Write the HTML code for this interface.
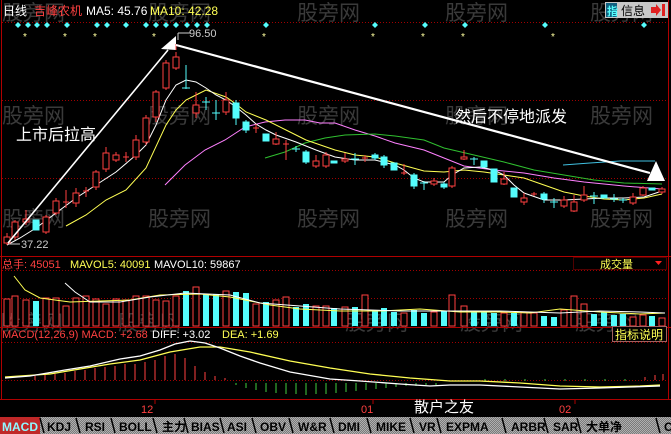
<!DOCTYPE html>
<html><head><meta charset="utf-8"><style>
html,body{margin:0;padding:0;background:#000;}
svg{display:block;font-family:"Liberation Sans","WenQuanYi Zen Hei","Noto Sans CJK SC",sans-serif;}
.r line,.r rect{stroke:#ff4040;stroke-width:1;fill:#000}
.c line{stroke:#54fcfc;stroke-width:1}
.c rect{fill:#54fcfc;stroke:#54fcfc}
.vr rect{stroke:#ff4040;fill:#000}
.vc rect{fill:#54fcfc}
.wm{fill:#3a3a3a;font-size:21px}
</style></head><body>
<svg width="671" height="434" viewBox="0 0 671 434" xmlns="http://www.w3.org/2000/svg">
<rect width="671" height="434" fill="#000"/>
<g class="wm">
<text x="2" y="20">股旁网</text><text x="148" y="20">股旁网</text><text x="297" y="20">股旁网</text><text x="445" y="20">股旁网</text><text x="590" y="20">股旁网</text>
<text x="2" y="123">股旁网</text><text x="148" y="123">股旁网</text><text x="297" y="123">股旁网</text><text x="445" y="123">股旁网</text><text x="590" y="123">股旁网</text>
<text x="2" y="226">股旁网</text><text x="148" y="226">股旁网</text><text x="297" y="226">股旁网</text><text x="445" y="226">股旁网</text><text x="590" y="226">股旁网</text>
<text x="0" y="330">股旁网</text><text x="118" y="330">股旁网</text><text x="345" y="330">股旁网</text><text x="460" y="330">股旁网</text><text x="575" y="330">股旁网</text>
</g>
<line x1="1.5" y1="0" x2="1.5" y2="400" stroke="#b00000"/>
<line x1="668.5" y1="0" x2="668.5" y2="400" stroke="#b00000"/>
<g stroke="#a00000" stroke-dasharray="1,2">
<line x1="2" y1="22.5" x2="668" y2="22.5"/><line x1="2" y1="100.5" x2="668" y2="100.5"/><line x1="2" y1="178.5" x2="668" y2="178.5"/>
<line x1="2" y1="270.5" x2="668" y2="270.5"/><line x1="2" y1="298.5" x2="668" y2="298.5"/>
<line x1="2" y1="342.5" x2="668" y2="342.5"/><line x1="2" y1="380.5" x2="668" y2="380.5"/>
</g>
<line x1="0" y1="256.5" x2="671" y2="256.5" stroke="#b00000"/>
<line x1="0" y1="327.5" x2="671" y2="327.5" stroke="#b00000"/>
<line x1="0" y1="399.5" x2="671" y2="399.5" stroke="#b00000"/>
<text x="3" y="15" font-size="12" fill="#fff">日线</text>
<text x="34" y="15" font-size="12" fill="#ff4040">吉峰农机</text>
<text x="86" y="15" font-size="12" fill="#fff">MA5: 45.76</text>
<text x="150" y="15" font-size="12" fill="#ffff54">MA10: 42.28</text>
<rect x="605" y="2" width="63" height="16" fill="#c8c8c8"/>
<rect x="606" y="3" width="11" height="14" fill="#106080"/>
<text x="607" y="15" font-size="11" fill="#54fcfc" font-weight="bold">指</text>
<text x="621" y="15" font-size="12" fill="#000">信息</text>
<path d="M651 7h5v-3l5 6-5 6v-3h-5z" fill="#e02020"/><rect x="662" y="4" width="3" height="12" fill="#e02020"/>
<g fill="#54fcfc">
<path d="M18 22l3 3-3 3-3-3z"/><path d="M28 22l3 3-3 3-3-3z"/><path d="M37 22l3 3-3 3-3-3z"/><path d="M47 22l3 3-3 3-3-3z"/><path d="M67 22l3 3-3 3-3-3z"/><path d="M97 22l3 3-3 3-3-3z"/><path d="M107 22l3 3-3 3-3-3z"/><path d="M126 22l3 3-3 3-3-3z"/><path d="M146 22l3 3-3 3-3-3z"/><path d="M156 22l3 3-3 3-3-3z"/><path d="M166 22l3 3-3 3-3-3z"/><path d="M176 22l3 3-3 3-3-3z"/><path d="M187 22l3 3-3 3-3-3z"/><path d="M197 22l3 3-3 3-3-3z"/><path d="M207 22l3 3-3 3-3-3z"/><path d="M266 22l3 3-3 3-3-3z"/><path d="M375 22l3 3-3 3-3-3z"/><path d="M425 22l3 3-3 3-3-3z"/><path d="M465 22l3 3-3 3-3-3z"/><path d="M545 22l3 3-3 3-3-3z"/><path d="M644 22l3 3-3 3-3-3z"/>
</g>
<g fill="#ffffa0" font-size="10"><text x="23" y="40">*</text><text x="63" y="40">*</text><text x="93" y="40">*</text><text x="152" y="40">*</text><text x="262" y="40">*</text><text x="371" y="40">*</text><text x="421" y="40">*</text><text x="461" y="40">*</text><text x="551" y="40">*</text></g>
<polyline fill="none" stroke="#ff80ff" points="165,185 185,165 205,150 225,140 245,127 265,122 285,120 305,120 320,123 335,123 355,130 375,136 395,143 424,150 444,158 464,166 494,170 524,173 554,178 584,182 624,186 662,189"/>
<polyline fill="none" stroke="#30c030" points="265,158 285,152 305,143 325,138 345,135 375,134 395,136 424,140 444,148 474,155 504,162 534,170 564,175 594,180 624,183 662,184"/>
<polyline fill="none" stroke="#40c0e0" points="563,165 590,163 620,161 655,161"/>
<polyline fill="none" stroke="#ffff54" points="66,226 86,215 106,200 126,190 146,168 166,125 176,110 186,100 196,95 206,90 226,97 236,104 246,112 266,120 286,130 306,140 335,150 355,155 375,157 395,163 424,171 444,172 464,170 484,172 504,175 524,178 544,185 564,192 584,196 604,199 624,200 644,198 662,194"/>
<polyline fill="none" stroke="#fff" points="7,245 20,238 36,228 56,213 76,198 96,185 116,172 136,155 146,145 156,125 166,100 176,85 186,80 196,82 206,88 216,95 226,100 236,107 246,115 256,124 266,130 276,135 296,142 316,150 335,157 355,160 375,160 395,165 404,170 414,178 424,182 444,182 452,175 464,168 480,167 494,170 504,175 514,185 524,193 544,200 564,200 584,199 604,198 624,198 644,197 662,191"/>
<g class="r">
<line x1="7" y1="233" x2="7" y2="245"/><rect x="4" y="237" width="6" height="6"/>
<line x1="15" y1="220" x2="15" y2="240"/><rect x="12" y="222" width="6" height="15"/>
<line x1="26" y1="210" x2="26" y2="225"/><rect x="23" y="219" width="6" height="3"/>
<line x1="46" y1="215" x2="46" y2="234"/><rect x="43" y="217" width="6" height="15"/>
<line x1="56" y1="198" x2="56" y2="215"/><rect x="53" y="201" width="6" height="12"/>
<line x1="66" y1="190" x2="66" y2="208"/><line x1="63" y1="202" x2="69" y2="202"/>
<line x1="76" y1="188" x2="76" y2="207"/><rect x="73" y="193" width="6" height="10"/>
<line x1="86" y1="187" x2="86" y2="197"/><line x1="83" y1="191" x2="89" y2="191"/>
<line x1="96" y1="170" x2="96" y2="190"/><rect x="93" y="172" width="6" height="15"/>
<line x1="106" y1="147" x2="106" y2="172"/><rect x="103" y="153" width="6" height="16"/>
<line x1="116" y1="152" x2="116" y2="162"/><rect x="113" y="155" width="6" height="5"/>
<line x1="126" y1="152" x2="126" y2="162"/><line x1="123" y1="157" x2="129" y2="157"/>
<line x1="136" y1="135" x2="136" y2="160"/><rect x="133" y="140" width="6" height="17"/>
<line x1="146" y1="115" x2="146" y2="145"/><rect x="143" y="118" width="6" height="24"/>
<line x1="156" y1="90" x2="156" y2="122"/><rect x="153" y="92" width="6" height="25"/>
<line x1="166" y1="60" x2="166" y2="90"/><rect x="163" y="63" width="6" height="25"/>
<line x1="176" y1="52" x2="176" y2="70"/><rect x="173" y="57" width="6" height="11"/>
<line x1="196" y1="92" x2="196" y2="118"/><rect x="193" y="105" width="6" height="8"/>
<line x1="226" y1="92" x2="226" y2="115"/><rect x="223" y="100" width="6" height="12"/>
<line x1="256" y1="124" x2="256" y2="133"/><line x1="253" y1="128" x2="259" y2="128"/>
<line x1="276" y1="132" x2="276" y2="145"/><rect x="273" y="139" width="6" height="5"/>
<line x1="286" y1="140" x2="286" y2="160"/><line x1="283" y1="144" x2="289" y2="144"/>
<line x1="316" y1="155" x2="316" y2="168"/><rect x="313" y="161" width="6" height="5"/>
<line x1="326" y1="152" x2="326" y2="168"/><rect x="323" y="155" width="6" height="11"/>
<line x1="345" y1="153" x2="345" y2="163"/><rect x="342" y="159" width="6" height="2"/>
<line x1="365" y1="155" x2="365" y2="162"/><line x1="362" y1="158" x2="368" y2="158"/>
<line x1="404" y1="164" x2="404" y2="175"/><line x1="401" y1="173" x2="407" y2="173"/>
<line x1="434" y1="178" x2="434" y2="186"/><rect x="431" y="181" width="6" height="3"/>
<line x1="452" y1="166" x2="452" y2="188"/><rect x="449" y="168" width="6" height="18"/>
<line x1="464" y1="150" x2="464" y2="160"/><rect x="461" y="157" width="6" height="2"/>
<line x1="504" y1="172" x2="504" y2="185"/><rect x="501" y="179" width="6" height="5"/>
<line x1="524" y1="193" x2="524" y2="205"/><rect x="521" y="198" width="6" height="4"/>
<line x1="534" y1="192" x2="534" y2="196"/><line x1="531" y1="194" x2="537" y2="194"/>
<line x1="564" y1="196" x2="564" y2="208"/><rect x="561" y="200" width="6" height="6"/>
<line x1="574" y1="195" x2="574" y2="212"/><rect x="571" y="202" width="6" height="9"/>
<line x1="584" y1="186" x2="584" y2="202"/><rect x="581" y="195" width="6" height="5"/>
<line x1="633" y1="193" x2="633" y2="205"/><rect x="630" y="197" width="6" height="6"/>
<line x1="643" y1="186" x2="643" y2="196"/><rect x="640" y="188" width="6" height="7"/>
<line x1="662" y1="187" x2="662" y2="194"/><rect x="659" y="189" width="6" height="3"/>
</g>
<g class="c">
<rect x="33" y="220" width="6" height="10"/>
<line x1="186" y1="65" x2="186" y2="89"/><line x1="182" y1="88" x2="190" y2="88"/>
<line x1="206" y1="97" x2="206" y2="110"/><line x1="202" y1="102" x2="210" y2="102"/>
<line x1="216" y1="100" x2="216" y2="120"/><line x1="212" y1="113" x2="220" y2="113"/>
<line x1="236" y1="100" x2="236" y2="125"/><rect x="233" y="103" width="6" height="15"/>
<line x1="246" y1="120" x2="246" y2="133"/><rect x="243" y="122" width="6" height="8"/>
<rect x="263" y="134" width="6" height="7"/>
<line x1="296" y1="146" x2="296" y2="152"/><line x1="292" y1="149" x2="300" y2="149"/>
<line x1="306" y1="150" x2="306" y2="164"/><rect x="303" y="152" width="6" height="10"/>
<rect x="331" y="161" width="6" height="2"/>
<line x1="355" y1="153" x2="355" y2="165"/><line x1="351" y1="159" x2="359" y2="159"/>
<line x1="375" y1="153" x2="375" y2="160"/><rect x="372" y="155" width="6" height="3"/>
<line x1="384" y1="155" x2="384" y2="168"/><rect x="381" y="157" width="6" height="8"/>
<rect x="391" y="163" width="6" height="7"/>
<line x1="414" y1="173" x2="414" y2="189"/><rect x="411" y="175" width="6" height="11"/>
<line x1="424" y1="181" x2="424" y2="190"/><line x1="420" y1="183" x2="428" y2="183"/>
<line x1="444" y1="182" x2="444" y2="189"/><rect x="441" y="184" width="6" height="3"/>
<line x1="474" y1="157" x2="474" y2="165"/><line x1="470" y1="159" x2="478" y2="159"/>
<rect x="481" y="161" width="6" height="6"/>
<rect x="491" y="169" width="6" height="13"/>
<rect x="511" y="188" width="6" height="9"/>
<line x1="544" y1="192" x2="544" y2="203"/><rect x="541" y="194" width="6" height="5"/>
<line x1="554" y1="198" x2="554" y2="208"/><line x1="550" y1="202" x2="558" y2="202"/>
<line x1="594" y1="192" x2="594" y2="204"/><line x1="590" y1="196" x2="598" y2="196"/>
<rect x="601" y="195" width="6" height="3"/>
<line x1="614" y1="194" x2="614" y2="202"/><line x1="610" y1="199" x2="618" y2="199"/>
<line x1="623" y1="198" x2="623" y2="203"/><line x1="619" y1="200" x2="627" y2="200"/>
<rect x="649" y="188" width="6" height="2"/>
</g>
<line x1="8" y1="243" x2="168" y2="50" stroke="#fff" stroke-width="1.6"/>
<path d="M161 49 L176 36 L176 50 Z" fill="#fff"/>
<line x1="176" y1="44" x2="176" y2="50" stroke="#ff4040"/>
<line x1="176" y1="45" x2="650" y2="173" stroke="#fff" stroke-width="2.2"/>
<path d="M656 161 L665 181 L647 181 Z" fill="#fff"/>
<line x1="178" y1="33" x2="190" y2="33" stroke="#ccc"/><line x1="178" y1="33" x2="178" y2="40" stroke="#ccc"/>
<text x="189" y="37" font-size="11" fill="#ccc">96.50</text>
<line x1="8" y1="244" x2="20" y2="244" stroke="#ccc"/>
<text x="21" y="248" font-size="11" fill="#ccc">37.22</text>
<text x="16" y="140" font-size="16" fill="#fff">上市后拉高</text>
<text x="455" y="122" font-size="16" fill="#fff">然后不停地派发</text>
<text x="2" y="268" font-size="11" fill="#ff4040">总手: 45051</text>
<text x="70" y="268" font-size="11" fill="#ffff54">MAVOL5: 40091</text>
<text x="154" y="268" font-size="11" fill="#fff">MAVOL10: 59867</text>
<rect x="573.5" y="257.5" width="93" height="12" fill="#000" stroke="#a00000" stroke-dasharray="1,1"/>
<text x="600" y="268" font-size="11" fill="#ffff54">成交量</text>
<path d="M655 261h7l-3.5 4z" fill="#ff2020"/>
<g class="vr">
<rect x="4" y="299" width="6" height="27"/><rect x="12" y="296" width="6" height="30"/><rect x="23" y="300" width="6" height="26"/><rect x="43" y="298" width="6" height="28"/><rect x="53" y="298" width="6" height="28"/><rect x="63" y="306" width="6" height="20"/><rect x="73" y="298" width="6" height="28"/><rect x="83" y="296" width="6" height="30"/><rect x="93" y="299" width="6" height="27"/><rect x="103" y="304" width="6" height="22"/><rect x="113" y="299" width="6" height="27"/><rect x="123" y="300" width="6" height="26"/><rect x="133" y="296" width="6" height="30"/><rect x="143" y="296" width="6" height="30"/><rect x="153" y="300" width="6" height="26"/><rect x="163" y="301" width="6" height="25"/><rect x="173" y="296" width="6" height="30"/><rect x="193" y="287" width="6" height="39"/><rect x="223" y="291" width="6" height="35"/><rect x="253" y="304" width="6" height="22"/><rect x="273" y="300" width="6" height="26"/><rect x="283" y="297" width="6" height="29"/><rect x="313" y="306" width="6" height="20"/><rect x="323" y="306" width="6" height="20"/><rect x="342" y="307" width="6" height="19"/><rect x="362" y="295" width="6" height="31"/><rect x="401" y="313" width="6" height="13"/><rect x="431" y="312" width="6" height="14"/><rect x="449" y="295" width="6" height="31"/><rect x="461" y="306" width="6" height="20"/><rect x="501" y="313" width="6" height="13"/><rect x="521" y="312" width="6" height="14"/><rect x="531" y="313" width="6" height="13"/><rect x="561" y="310" width="6" height="16"/><rect x="571" y="296" width="6" height="30"/><rect x="581" y="304" width="6" height="22"/><rect x="630" y="317" width="6" height="9"/><rect x="640" y="315" width="6" height="11"/><rect x="659" y="318" width="6" height="8"/>
</g>
<g class="vc">
<rect x="33" y="301" width="6" height="25"/><rect x="183" y="291" width="6" height="35"/><rect x="203" y="294" width="6" height="32"/><rect x="213" y="294" width="6" height="32"/><rect x="233" y="292" width="6" height="34"/><rect x="243" y="293" width="6" height="33"/><rect x="263" y="302" width="6" height="24"/><rect x="293" y="307" width="6" height="19"/><rect x="303" y="304" width="6" height="22"/><rect x="331" y="308" width="6" height="18"/><rect x="352" y="307" width="6" height="19"/><rect x="372" y="311" width="6" height="15"/><rect x="381" y="308" width="6" height="18"/><rect x="391" y="312" width="6" height="14"/><rect x="411" y="310" width="6" height="16"/><rect x="421" y="313" width="6" height="13"/><rect x="441" y="311" width="6" height="15"/><rect x="471" y="311" width="6" height="15"/><rect x="481" y="312" width="6" height="14"/><rect x="491" y="313" width="6" height="13"/><rect x="511" y="313" width="6" height="13"/><rect x="541" y="316" width="6" height="10"/><rect x="551" y="317" width="6" height="9"/><rect x="591" y="314" width="6" height="12"/><rect x="601" y="312" width="6" height="14"/><rect x="611" y="315" width="6" height="11"/><rect x="620" y="314" width="6" height="12"/><rect x="649" y="316" width="6" height="10"/>
</g>
<polyline fill="none" stroke="#ffff54" points="14,276 25,290 40,298 70,302 100,301 130,300 160,295 200,294 230,297 270,305 300,309 340,311 380,311 420,309 460,312 500,312 530,313 560,309 600,312 640,314 665,313"/>
<polyline fill="none" stroke="#fff" points="65,283 75,292 90,302 120,302 150,297 185,293 230,295 260,303 300,306 340,309 400,311 450,311 500,311 560,313 600,311 640,312 665,313"/>
<text x="2" y="338" font-size="11" fill="#ff4040">MACD(12,26,9) MACD: +2.68</text>
<text x="152" y="338" font-size="11" fill="#fff">DIFF: +3.02</text>
<text x="222" y="338" font-size="11" fill="#ffff54">DEA: +1.69</text>
<rect x="612.5" y="326.5" width="54" height="15" fill="#000" stroke="#a06060"/>
<text x="615" y="339" font-size="12" fill="#ffff54">指标说明</text>
<g stroke="#ff4040">
<line x1="35" y1="380" x2="35" y2="376"/><line x1="45" y1="380" x2="45" y2="375"/><line x1="55" y1="380" x2="55" y2="374"/><line x1="65" y1="380" x2="65" y2="373"/><line x1="75" y1="380" x2="75" y2="371"/><line x1="85" y1="380" x2="85" y2="370"/><line x1="95" y1="380" x2="95" y2="368"/><line x1="105" y1="380" x2="105" y2="367"/><line x1="115" y1="380" x2="115" y2="366"/><line x1="125" y1="380" x2="125" y2="364"/><line x1="135" y1="380" x2="135" y2="364"/><line x1="145" y1="380" x2="145" y2="362"/><line x1="155" y1="380" x2="155" y2="360"/><line x1="165" y1="380" x2="165" y2="356"/><line x1="175" y1="380" x2="175" y2="354"/><line x1="185" y1="380" x2="185" y2="358"/><line x1="195" y1="380" x2="195" y2="366"/><line x1="205" y1="380" x2="205" y2="372"/><line x1="215" y1="380" x2="215" y2="376"/><line x1="225" y1="380" x2="225" y2="378"/>
<line x1="645" y1="380" x2="645" y2="377"/><line x1="655" y1="380" x2="655" y2="375"/><line x1="663" y1="380" x2="663" y2="374"/>
</g>
<g stroke="#40d040">
<line x1="236" y1="383" x2="236" y2="385"/><line x1="246" y1="383" x2="246" y2="388"/><line x1="256" y1="383" x2="256" y2="390"/><line x1="266" y1="383" x2="266" y2="392"/><line x1="276" y1="383" x2="276" y2="393"/><line x1="286" y1="383" x2="286" y2="394"/><line x1="296" y1="383" x2="296" y2="394"/><line x1="306" y1="383" x2="306" y2="395"/><line x1="316" y1="383" x2="316" y2="394"/><line x1="326" y1="383" x2="326" y2="394"/><line x1="336" y1="383" x2="336" y2="393"/><line x1="346" y1="383" x2="346" y2="392"/><line x1="356" y1="383" x2="356" y2="391"/><line x1="366" y1="383" x2="366" y2="390"/><line x1="376" y1="383" x2="376" y2="389"/><line x1="386" y1="383" x2="386" y2="388"/><line x1="396" y1="383" x2="396" y2="387"/><line x1="406" y1="383" x2="406" y2="386"/><line x1="416" y1="383" x2="416" y2="386"/><line x1="426" y1="383" x2="426" y2="385"/><line x1="436" y1="383" x2="436" y2="385"/>
<line x1="485" y1="379" x2="485" y2="381"/><line x1="505" y1="379" x2="505" y2="381"/><line x1="525" y1="379" x2="525" y2="381"/><line x1="545" y1="379" x2="545" y2="381"/><line x1="565" y1="379" x2="565" y2="381"/><line x1="585" y1="379" x2="585" y2="381"/><line x1="605" y1="379" x2="605" y2="381"/><line x1="625" y1="379" x2="625" y2="381"/>
</g>
<polyline fill="none" stroke="#ffff54" stroke-width="1.3" points="5,377 50,374 80,369 110,364 140,360 170,352 200,347 220,347 250,352 290,361 330,368 370,374 410,378 450,381 480,381 520,383 560,386 600,387 640,386 660,385"/>
<polyline fill="none" stroke="#fff" stroke-width="1.3" points="5,378 30,376 65,370 90,366 120,359 140,356 160,350 175,344 190,341 205,343 220,348 240,356 260,363 290,372 330,379 360,381 400,384 430,386 450,385 480,385 520,387 560,389 600,388 630,387 660,386"/>
<g stroke="#b00000"><line x1="155" y1="400" x2="155" y2="404"/><line x1="373" y1="400" x2="373" y2="404"/><line x1="575" y1="400" x2="575" y2="404"/></g>
<text x="141" y="413" font-size="11" fill="#ff4040">12</text>
<text x="361" y="413" font-size="11" fill="#ff4040">01</text>
<text x="559" y="413" font-size="11" fill="#ff4040">02</text>
<text x="414" y="412" font-size="15" fill="#fff">散户之友</text>
<defs><pattern id="ck" width="2" height="2" patternUnits="userSpaceOnUse"><rect width="2" height="2" fill="#7a7a7a"/><rect width="1" height="1" fill="#b0b0b0"/><rect x="1" y="1" width="1" height="1" fill="#b0b0b0"/></pattern></defs>
<rect x="0" y="417" width="671" height="17" fill="url(#ck)"/>
<rect x="0" y="417" width="40" height="17" fill="#c02828"/>
<text x="2" y="431" font-size="12" font-weight="bold" fill="#8ff8ff">MACD</text>
<g font-size="12" font-weight="bold" fill="#000">
<text x="47" y="431">KDJ</text><text x="85" y="431">RSI</text><text x="119" y="431">BOLL</text><text x="162" y="431">主力</text><text x="191" y="431">BIAS</text><text x="227" y="431">ASI</text><text x="260" y="431">OBV</text><text x="298" y="431">W&amp;R</text><text x="338" y="431">DMI</text><text x="376" y="431">MIKE</text><text x="419" y="431">VR</text><text x="446" y="431">EXPMA</text><text x="511" y="431">ARBR</text><text x="553" y="431">SAR</text><text x="586" y="431">大单净</text><text x="664" y="431">C</text>
</g>
<g stroke="#000" stroke-width="1.5">
<line x1="40" y1="418" x2="44" y2="433"/><line x1="76" y1="418" x2="80" y2="433"/><line x1="111" y1="418" x2="115" y2="433"/><line x1="153" y1="418" x2="157" y2="433"/><line x1="184" y1="418" x2="188" y2="433"/><line x1="220" y1="418" x2="224" y2="433"/><line x1="252" y1="418" x2="256" y2="433"/><line x1="289" y1="418" x2="293" y2="433"/><line x1="330" y1="418" x2="334" y2="433"/><line x1="367" y1="418" x2="371" y2="433"/><line x1="410" y1="418" x2="414" y2="433"/><line x1="437" y1="418" x2="441" y2="433"/><line x1="502" y1="418" x2="506" y2="433"/><line x1="544" y1="418" x2="548" y2="433"/><line x1="577" y1="418" x2="581" y2="433"/><line x1="656" y1="418" x2="660" y2="433"/>
</g>
</svg>
</body></html>
